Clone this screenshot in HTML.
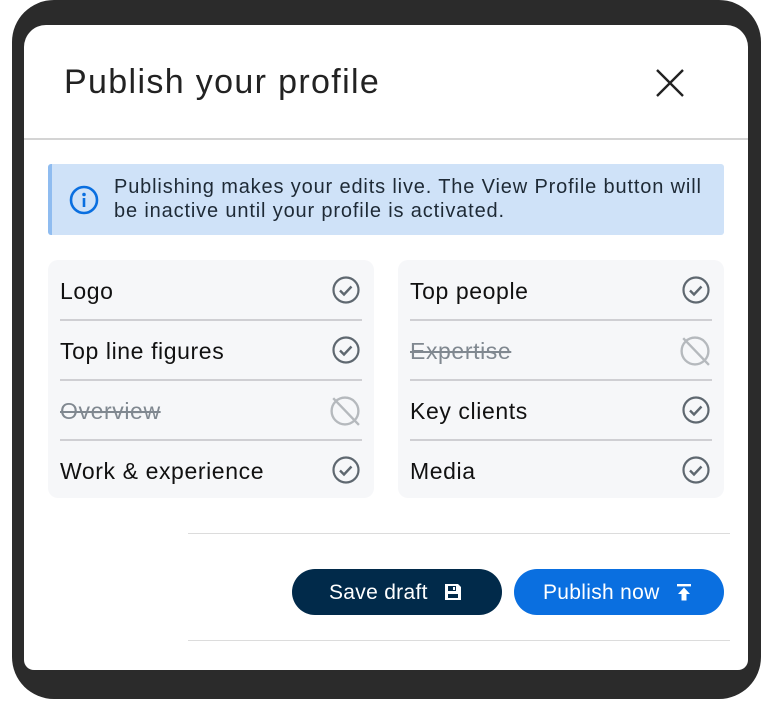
<!DOCTYPE html>
<html><head><style>
*{margin:0;padding:0;box-sizing:border-box}
body{width:772px;height:707px;background:#fff;position:relative;font-family:"Liberation Sans",sans-serif;overflow:hidden}
.frame{position:absolute;left:12px;top:0;width:749px;height:699px;background:#2b2b2b;border-radius:42px}
.card{position:absolute;left:24px;top:25px;width:724px;height:645px;background:#fff;border-radius:22px 22px 10px 10px;overflow:hidden}
h1{position:absolute;left:40px;top:38px;font-size:34px;font-weight:400;color:#222;letter-spacing:1.35px}
.x{position:absolute;left:630px;top:42px}
.hr{position:absolute;left:0;top:113px;width:724px;height:2px;background:#d4d4d4}
.info{position:absolute;left:24px;top:139px;width:676px;height:71px;background:#cfe2f8;border-left:4px solid #8fbcf0;border-radius:3px}
.info p{position:absolute;left:62px;top:11px;font-size:20px;line-height:24px;color:#1e2a36;letter-spacing:0.85px;white-space:nowrap}
.info svg{position:absolute;left:17px;top:21px}
.list{position:absolute;top:235px;width:326px;height:238px;background:#f6f7f9;border-radius:10px}
.row{position:absolute;left:12px;width:302px;height:60px;font-size:23px;color:#111;line-height:62px;letter-spacing:0.6px}
.sep{position:absolute;left:12px;width:302px;height:2px;background:#cfcfd3}
.row svg{position:absolute;right:2px;top:16px}
.off{color:#808890;text-decoration:line-through}
.fl{position:absolute;left:164px;width:542px;height:1px;background:#dcdcdc}
.btn{position:absolute;top:544px;width:210px;height:46px;border-radius:23px;color:#fff;font-size:21px;line-height:48px;letter-spacing:0.3px}
</style></head><body>
<div class="frame"></div>
<div class="card">
<h1>Publish your profile</h1>
<svg class="x" width="32" height="32" viewBox="0 0 32 32"><path d="M3 3L29 29M29 3L3 29" stroke="#222" stroke-width="2.4"/></svg>
<div class="hr"></div>
<div class="info"><svg width="30" height="30" viewBox="0 0 30 30"><circle cx="15" cy="15" r="13" fill="none" stroke="#0a6fe0" stroke-width="2.6"/><circle cx="15" cy="9.5" r="1.8" fill="#0a6fe0"/><rect x="13.7" y="13" width="2.6" height="9" fill="#0a6fe0"/></svg>
<p>Publishing makes your edits live. The View Profile button will<br>be inactive until your profile is activated.</p></div>

<div class="list" style="left:24px">
<div class="row" style="top:0">Logo<svg width="28" height="28" viewBox="0 0 28 28"><circle cx="14" cy="14" r="12.5" fill="none" stroke="#5f6870" stroke-width="2.2"/><path d="M8 14.5l4 4 7.5-8" fill="none" stroke="#5f6870" stroke-width="2.4"/></svg></div>
<div class="sep" style="top:59px"></div>
<div class="row" style="top:60px">Top line figures<svg width="28" height="28" viewBox="0 0 28 28"><circle cx="14" cy="14" r="12.5" fill="none" stroke="#5f6870" stroke-width="2.2"/><path d="M8 14.5l4 4 7.5-8" fill="none" stroke="#5f6870" stroke-width="2.4"/></svg></div>
<div class="sep" style="top:119px"></div>
<div class="row off" style="top:120px">Overview<svg width="30" height="30" viewBox="0 0 28 28"><circle cx="14" cy="14" r="12.5" fill="none" stroke="#b5b9bd" stroke-width="2.2"/><path d="M3 2L27 27" stroke="#b5b9bd" stroke-width="2.2"/></svg></div>
<div class="sep" style="top:179px"></div>
<div class="row" style="top:180px">Work &amp; experience<svg width="28" height="28" viewBox="0 0 28 28"><circle cx="14" cy="14" r="12.5" fill="none" stroke="#5f6870" stroke-width="2.2"/><path d="M8 14.5l4 4 7.5-8" fill="none" stroke="#5f6870" stroke-width="2.4"/></svg></div>
</div>

<div class="list" style="left:374px">
<div class="row" style="top:0">Top people<svg width="28" height="28" viewBox="0 0 28 28"><circle cx="14" cy="14" r="12.5" fill="none" stroke="#5f6870" stroke-width="2.2"/><path d="M8 14.5l4 4 7.5-8" fill="none" stroke="#5f6870" stroke-width="2.4"/></svg></div>
<div class="sep" style="top:59px"></div>
<div class="row off" style="top:60px">Expertise<svg width="30" height="30" viewBox="0 0 28 28"><circle cx="14" cy="14" r="12.5" fill="none" stroke="#b5b9bd" stroke-width="2.2"/><path d="M3 2L27 27" stroke="#b5b9bd" stroke-width="2.2"/></svg></div>
<div class="sep" style="top:119px"></div>
<div class="row" style="top:120px">Key clients<svg width="28" height="28" viewBox="0 0 28 28"><circle cx="14" cy="14" r="12.5" fill="none" stroke="#5f6870" stroke-width="2.2"/><path d="M8 14.5l4 4 7.5-8" fill="none" stroke="#5f6870" stroke-width="2.4"/></svg></div>
<div class="sep" style="top:179px"></div>
<div class="row" style="top:180px">Media<svg width="28" height="28" viewBox="0 0 28 28"><circle cx="14" cy="14" r="12.5" fill="none" stroke="#5f6870" stroke-width="2.2"/><path d="M8 14.5l4 4 7.5-8" fill="none" stroke="#5f6870" stroke-width="2.4"/></svg></div>
</div>

<div class="fl" style="top:508px"></div>
<div class="btn" style="left:268px;background:#012a4a"><span style="position:absolute;left:37px">Save draft</span>
<svg style="position:absolute;left:152px;top:14px" width="18" height="18" viewBox="0 0 18 18"><path d="M1 1h13l3 3v13H1z" fill="#fff"/><rect x="4" y="3" width="8" height="5" fill="#012a4a"/><rect x="4" y="11" width="10" height="4" fill="#012a4a"/><rect x="9" y="4" width="2" height="3" fill="#fff"/></svg></div>
<div class="btn" style="left:490px;background:#0a6fe0"><span style="position:absolute;left:29px">Publish now</span>
<svg style="position:absolute;left:162px;top:15px" width="16" height="17" viewBox="0 0 16 17"><rect x="1" y="0" width="14" height="2.4" fill="#fff"/><path d="M8 3.5L14 10H10.5V16.5H5.5V10H2z" fill="#fff"/></svg></div>
<div class="fl" style="top:615px"></div>
</div>
</body></html>
